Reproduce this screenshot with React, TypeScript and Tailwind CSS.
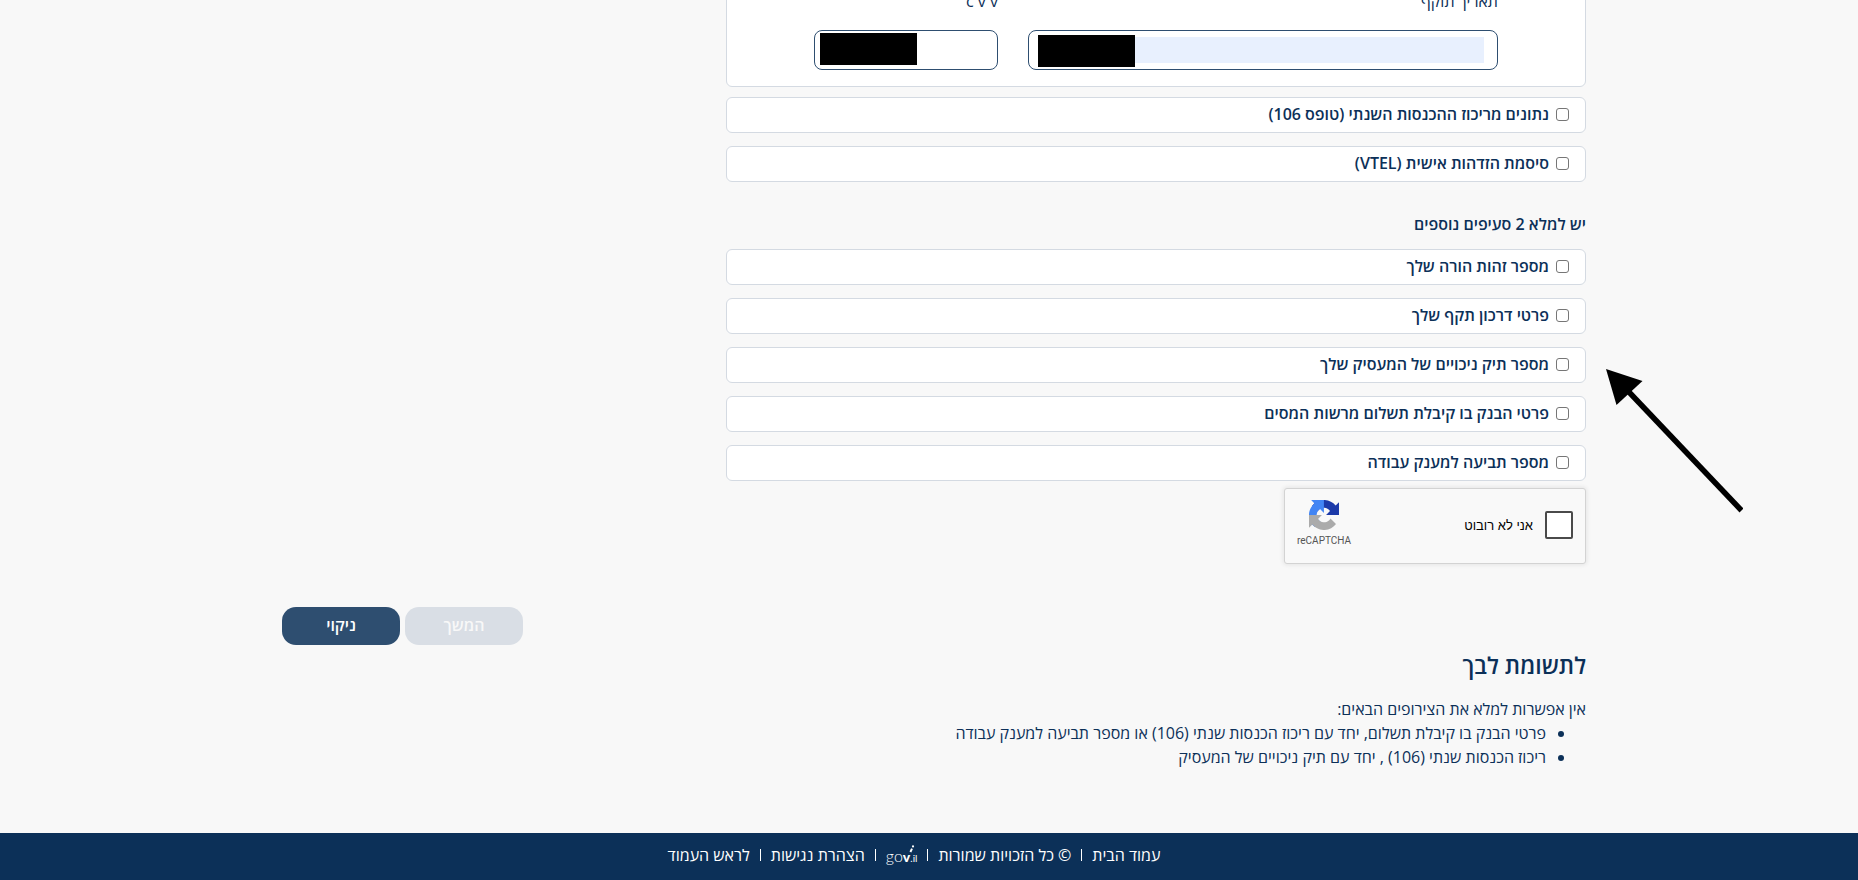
import type { FC, ReactNode } from 'react'

type OptionRowProps = {
  id: string
  children: ReactNode
}

const primaryOptions = [
  { id: 'form106', label: 'נתונים מריכוז ההכנסות השנתי (טופס 106)' },
  { id: 'vtel', label: 'סיסמת הזדהות אישית (VTEL)' },
]

const extraOptions = [
  { id: 'parent-id', label: 'מספר זהות הורה שלך' },
  { id: 'passport', label: 'פרטי דרכון תקף שלך' },
  { id: 'employer-file', label: 'מספר תיק ניכויים של המעסיק שלך' },
  { id: 'bank', label: 'פרטי הבנק בו קיבלת תשלום מרשות המסים' },
  { id: 'work-grant', label: 'מספר תביעה למענק עבודה' },
]

const OptionRow: FC<OptionRowProps> = ({ id, children }) => (
  <li className="flex h-9 items-center gap-[7px] rounded-md border border-[#d4dae2] bg-white px-4 pb-[2px]">
    <input
      id={id}
      type="checkbox"
      className="size-[13px] shrink-0 appearance-none rounded-[3px] border border-[#767676] bg-white checked:bg-[#0c3058]"
    />
    <label htmlFor={id} className="font-semibold">
      {children}
    </label>
  </li>
)

const CardDetails = () => (
  <div className="-mt-3 flex gap-[30px] rounded-b-md border border-[#d4dae2] bg-white px-[87px] pb-4">
    <div className="flex flex-1 flex-col gap-[17px]">
      <label htmlFor="expiry" className="leading-6">
        תאריך תוקף
      </label>
      <div className="relative flex h-10 items-center rounded-lg border border-[#2e4e70] bg-white pr-[13px] pl-[10px]">
        <input id="expiry" type="text" className="h-[26px] w-full bg-[#e8f0fe] outline-none" />
        <span className="absolute top-1 left-[9px] h-8 w-[97px] bg-black" />
      </div>
    </div>
    <div className="flex w-[184px] flex-col gap-[17px]">
      <label htmlFor="cvv" className="leading-6">
        c v v
      </label>
      <div className="relative flex h-10 items-center rounded-lg border border-[#2e4e70] bg-white px-[10px]">
        <input id="cvv" type="text" className="h-[26px] w-full outline-none" />
        <span className="absolute top-[2px] left-[5px] h-8 w-[97px] bg-black" />
      </div>
    </div>
  </div>
)

const PointerArrow = () => (
  <svg
    className="pointer-events-none absolute top-[120px] left-full ml-5"
    width="137"
    height="144"
    viewBox="0 0 137 144"
    aria-hidden="true"
  >
    <path d="M0 0 36.5 12 10.5 36Z" fill="#000" />
    <path d="M22 22 135.5 141.5" stroke="#000" strokeWidth="5.5" />
  </svg>
)

const RecaptchaLogo = () => (
  <svg width="30" height="30" viewBox="0 0 64 64" aria-hidden="true">
    <path
      fill="#1c3aa9"
      d="M64 31.95c0-.46-.01-.92-.03-1.37V4.56l-7.19 7.19C50.89 4.55 41.94-.05 31.92-.05 21.49-.05 12.22 4.93 6.38 12.65l11.79 11.91a15.63 15.63 0 0 1 4.78-5.36c2.06-1.61 4.98-2.92 8.97-2.92.48 0 .85.06 1.13.16 4.94.39 9.22 3.12 11.74 7.08l-8.35 8.35c10.57-.04 22.51-.07 27.56.08"
    />
    <path
      fill="#4285f4"
      d="M31.86.01c-.46 0-.91.01-1.37.03H4.56l7.19 7.19C4.55 13.12-.05 22.06-.05 32.08c0 10.44 4.98 19.71 12.7 25.54l11.91-11.79a15.63 15.63 0 0 1-5.36-4.78c-1.61-2.06-2.92-4.98-2.92-8.97 0-.48.06-.85.16-1.13.39-4.94 3.12-9.22 7.08-11.74l8.35 8.35C31.83 16.99 31.8 5.05 31.86.01"
    />
    <path
      fill="#ababab"
      d="M0 31.95c0 .46.01.92.03 1.37v26.11l7.19-7.19c5.89 7.2 14.84 11.8 24.86 11.8 10.43 0 19.7-4.98 25.54-12.7L45.83 39.43a15.63 15.63 0 0 1-4.78 5.36c-2.06 1.61-4.98 2.92-8.97 2.92-.48 0-.85-.06-1.13-.16-4.94-.39-9.22-3.12-11.74-7.08l8.35-8.35C16.99 32.16 5.05 32.13 0 31.95"
    />
  </svg>
)

const Recaptcha = () => (
  <div className="mt-[7px] flex h-[76px] w-[302px] justify-between rounded-[3px] border border-[#d3d3d3] bg-[#f9f9f9] px-3 shadow-[0_0_4px_1px_rgba(0,0,0,0.08)]">
    <div className="flex items-center gap-3 pb-[2px]">
      <input
        id="not-robot"
        type="checkbox"
        className="size-7 appearance-none rounded-xs border-2 border-[#4a4a4a] bg-white"
      />
      <label htmlFor="not-robot" className="pt-[2px] font-['Liberation_Sans',sans-serif] text-[13px] text-black">
        אני לא רובוט
      </label>
    </div>
    <div className="flex flex-col items-center pt-[11px]">
      <RecaptchaLogo />
      <span className="mt-[3px] font-[Roboto,sans-serif] text-[10px] leading-4 text-[#555]">reCAPTCHA</span>
    </div>
  </div>
)

const GovLogo = () => (
  <span dir="ltr" className="relative flex items-baseline pt-1 font-[Lato,sans-serif] text-base leading-5 font-light">
    go<b className="text-sm font-black">v</b>
    <span className="text-[10px] font-normal">.il</span>
    <svg className="absolute top-[3px] left-[23px]" width="6" height="8" viewBox="0 0 6 8" aria-hidden="true">
      <path d="M1.4 7 3 3.6" stroke="#fff" strokeWidth="2" />
      <circle cx="4" cy="1.4" r="1.1" fill="#fff" />
    </svg>
  </span>
)

const Separator = () => <span className="h-3 w-px bg-white" />

const Footer = () => (
  <footer className="flex h-[47px] items-center justify-center gap-[10px] bg-[#0c3058] pr-[30px] pb-1 text-white">
    <a href="#home">עמוד הבית</a>
    <Separator />
    <span>© כל הזכויות שמורות</span>
    <Separator />
    <a href="#gov">
      <GovLogo />
    </a>
    <Separator />
    <a href="#accessibility">הצהרת נגישות</a>
    <Separator />
    <a href="#top">לראש העמוד</a>
  </footer>
)

export default function App() {
  return (
    <div
      dir="rtl"
      className="flex min-h-screen flex-col overflow-hidden bg-[#f8f8f8] font-['Open_Sans','Noto_Sans',sans-serif] text-base text-[#0c3058]"
    >
      <main className="mx-auto w-full max-w-[1314px] flex-1">
        <div className="max-w-[860px]">
          <CardDetails />
          <ul className="mt-[10px] flex flex-col gap-[13px]">
            {primaryOptions.map((option) => (
              <OptionRow key={option.id} id={option.id}>
                {option.label}
              </OptionRow>
            ))}
          </ul>
          <h3 className="mt-[30px] leading-6 font-semibold">יש למלא 2 סעיפים נוספים</h3>
          <div className="relative mt-[13px]">
            <ul className="flex flex-col gap-[13px]">
              {extraOptions.map((option) => (
                <OptionRow key={option.id} id={option.id}>
                  {option.label}
                </OptionRow>
              ))}
            </ul>
            <PointerArrow />
          </div>
          <Recaptcha />
        </div>
        <div className="mt-[43px] flex justify-end gap-[5px] pl-[10px] font-semibold">
          <button type="button" disabled className="h-[38px] w-[118px] rounded-[14px] bg-[#d9dee5] pb-[2px] text-[#f8f8f8]">
            המשך
          </button>
          <button type="button" className="h-[38px] w-[118px] rounded-[14px] bg-[#2e4e70] pb-[2px] text-white">
            ניקוי
          </button>
        </div>
        <section className="mt-1">
          <h2 className="text-[23px] leading-8 font-semibold">לתשומת לבך</h2>
          <p className="mt-4 leading-6">אין אפשרות למלא את הצירופים הבאים:</p>
          <ul className="list-disc pr-10 leading-6">
            <li>פרטי הבנק בו קיבלת תשלום, יחד עם ריכוז הכנסות שנתי (106) או מספר תביעה למענק עבודה</li>
            <li>ריכוז הכנסות שנתי (106) , יחד עם תיק ניכויים של המעסיק</li>
          </ul>
        </section>
      </main>
      <Footer />
    </div>
  )
}
